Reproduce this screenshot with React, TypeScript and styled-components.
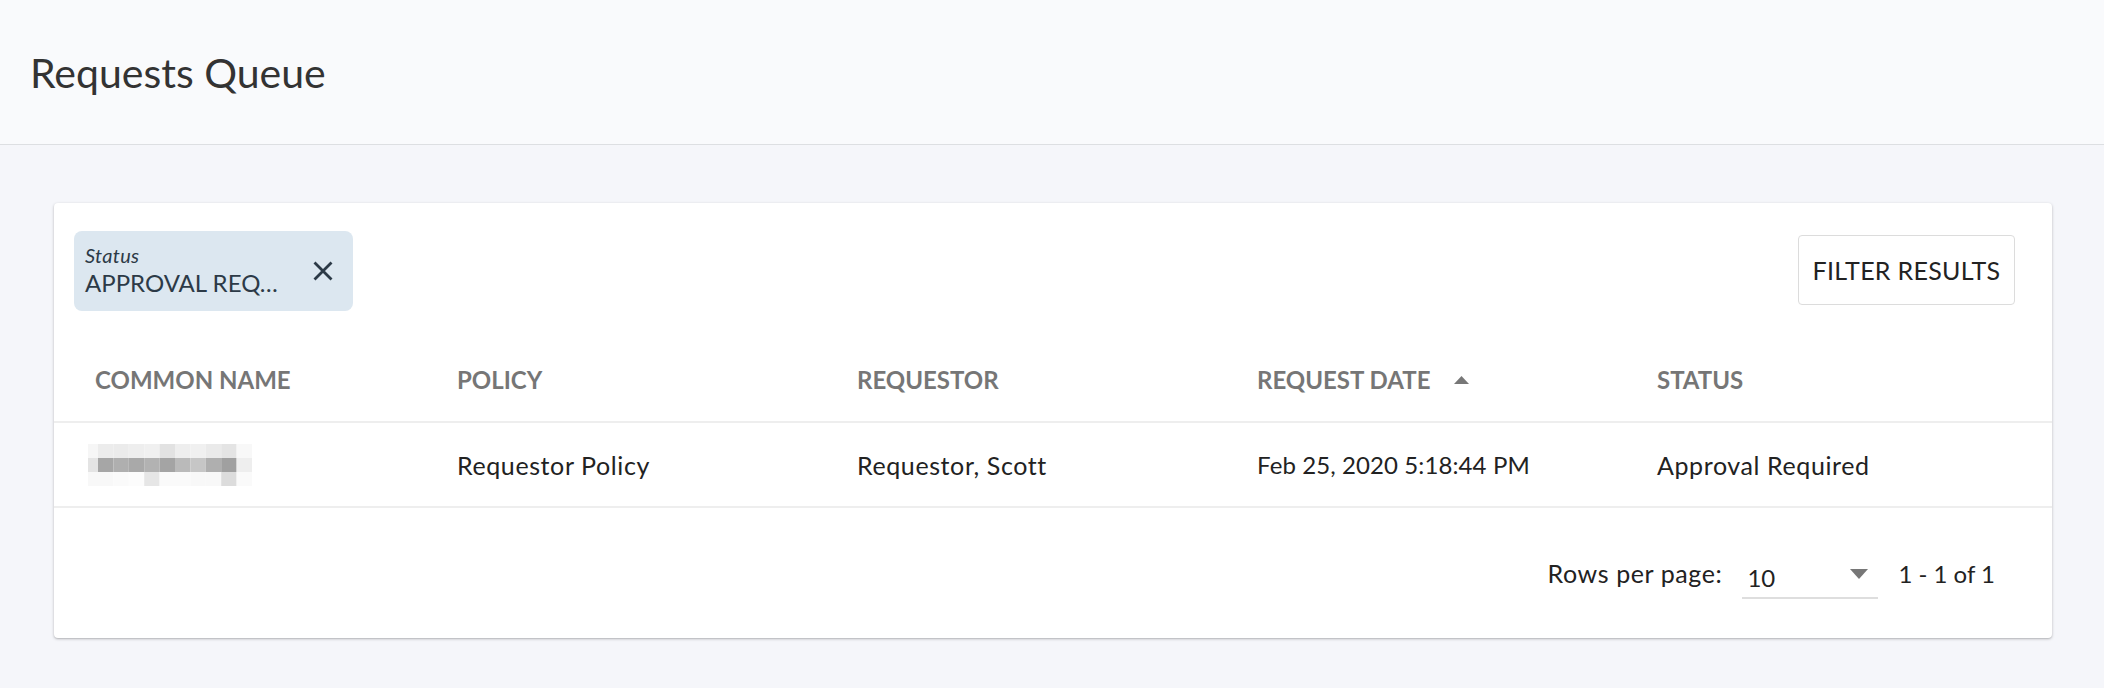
import React from "react";
import styled, { createGlobalStyle } from "styled-components";

const GlobalStyle = createGlobalStyle`
  html, body { margin: 0; padding: 0; }
  body {
    background: #f5f6fa;
    font-family: Lato, "Noto Sans", "Liberation Sans", sans-serif;
    color: #222;
  }
`;

const PageHeader = styled.header`
  height: 144px;
  background: #f9fafc;
  border-bottom: 1px solid #dddfe2;
  display: flex;
  align-items: center;
  padding-left: 30px;
`;

const Title = styled.h1`
  margin: 0;
  font-size: 41px;
  font-weight: 400;
  color: #333;
`;

const Main = styled.main`
  padding: 58px 52px 48px 54px;
`;

const Card = styled.section`
  background: #fff;
  border-radius: 4px;
  box-shadow: 0 1px 3px rgba(0, 0, 0, 0.25), 0 1px 1px rgba(0, 0, 0, 0.06);
`;

const Toolbar = styled.div`
  display: flex;
  justify-content: space-between;
  align-items: flex-start;
  padding: 28px 37px 27px 20px;
`;

const Chip = styled.div`
  width: 279px;
  height: 80px;
  box-sizing: border-box;
  background: #dce7f0;
  border-radius: 8px;
  display: flex;
  align-items: center;
  justify-content: space-between;
  padding: 0 19px 0 11px;
  color: #2c3a47;
`;

const ChipText = styled.div`
  display: flex;
  flex-direction: column;
`;

const ChipLabel = styled.span`
  font-size: 20px;
  font-style: italic;
  letter-spacing: 0.3px;
  line-height: 24px;
`;

const ChipValue = styled.span`
  font-size: 24px;
  line-height: 32px;
`;

const ChipClose = styled.button`
  border: none;
  background: none;
  padding: 0;
  width: 22px;
  height: 22px;
  display: flex;
  align-items: center;
  justify-content: center;
  color: #2c3a47;
  cursor: pointer;
`;

const FilterButton = styled.button`
  margin-top: 4px;
  width: 217px;
  height: 70px;
  box-sizing: border-box;
  border: 1.5px solid #dcdcdc;
  border-radius: 4px;
  background: #fff;
  font-family: inherit;
  font-size: 25px;
  letter-spacing: 0.3px;
  color: #222;
  cursor: pointer;
`;

const Row = styled.div<{ $head?: boolean }>`
  display: grid;
  grid-template-columns: 362px 400px 400px 400px 1fr;
  height: 85px;
  box-sizing: border-box;
  padding-left: 41px;
  border-bottom: 2px solid #eeeeee;
  align-items: center;
  font-size: ${(p) => (p.$head ? "24px" : "25px")};
  letter-spacing: ${(p) => (p.$head ? "0" : "0.6px")};
  font-weight: ${(p) => (p.$head ? 700 : 400)};
  color: ${(p) => (p.$head ? "#767676" : "#222")};
`;

const Cell = styled.div<{ $numeric?: boolean }>`
  display: flex;
  align-items: center;
  gap: 24px;
  white-space: nowrap;
  ${(p) => (p.$numeric ? "font-size: 24px; letter-spacing: 0.1px;" : "")}
`;

const Footer = styled.div`
  height: 130px;
  display: flex;
  justify-content: flex-end;
  align-items: center;
  padding-right: 57px;
  font-size: 24px;
  color: #222;
`;

const RowsLabel = styled.span`
  font-size: 25px;
  letter-spacing: 0.6px;
  margin-right: 20px;
`;

const Select = styled.div`
  width: 136px;
  height: 42px;
  box-sizing: border-box;
  border-bottom: 2px solid #dedede;
  display: flex;
  align-items: center;
  justify-content: space-between;
  padding: 0 10px 0 5px;
  margin-top: 10px;
  margin-right: 20px;
`;

const Caret = styled.span`
  display: flex;
  margin-bottom: 6px;
`;

const Blurred = () => {
  const rows = [
    ["#f6f6f6", "#ececec", "#ebebeb", "#eeeeee", "#f0f0f0", "#e2e2e2", "#eeeeee", "#f0f0f0", "#eaeaea", "#e4e4e4", "#f8f8f8"],
    ["#e4e4e4", "#a6a6a6", "#afafaf", "#a9a9a9", "#b2b2b2", "#a4a4a4", "#bababa", "#c6c6c6", "#afafaf", "#a0a0a0", "#eeeeee"],
    ["#f8f8f8", "#f8f8f8", "#fafafa", "#fcfcfc", "#e6e6e6", "#fafafa", "#fafafa", "#f8f8f8", "#f8f8f8", "#dcdcdc", "#fafafa"],
  ];
  const first = 10;
  const w = 15.4;
  return (
    <svg width={166} height={42} viewBox="0 0 166 42" style={{ marginLeft: -7 }}>
      {rows.map((r, ri) =>
        r.map((c, ci) => (
          <rect
            key={`${ri}-${ci}`}
            x={ci === 0 ? 0 : first + (ci - 1) * w}
            y={ri * 14}
            width={ci === 0 ? first : w}
            height={14}
            fill={c}
          />
        ))
      )}
    </svg>
  );
};

const CloseIcon = () => (
  <svg width="20" height="20" viewBox="0 0 20 20">
    <path d="M1.5 1.5 L18.5 18.5 M18.5 1.5 L1.5 18.5" stroke="currentColor" strokeWidth="2.8" />
  </svg>
);

const SortUp = () => (
  <svg width="15" height="8" viewBox="0 0 15 8">
    <path d="M0 8 L7.5 0 L15 8 Z" fill="#777" />
  </svg>
);

const DropDown = () => (
  <svg width="18" height="10" viewBox="0 0 18 10">
    <path d="M0 0 L18 0 L9 10 Z" fill="#777" />
  </svg>
);

export default function App() {
  return (
    <>
      <GlobalStyle />
      <PageHeader>
        <Title>Requests Queue</Title>
      </PageHeader>
      <Main>
        <Card>
          <Toolbar>
            <Chip>
              <ChipText>
                <ChipLabel>Status</ChipLabel>
                <ChipValue>APPROVAL REQ…</ChipValue>
              </ChipText>
              <ChipClose aria-label="Remove filter">
                <CloseIcon />
              </ChipClose>
            </Chip>
            <FilterButton>FILTER RESULTS</FilterButton>
          </Toolbar>
          <Row $head>
            <Cell>COMMON NAME</Cell>
            <Cell>POLICY</Cell>
            <Cell>REQUESTOR</Cell>
            <Cell>
              REQUEST DATE <SortUp />
            </Cell>
            <Cell>STATUS</Cell>
          </Row>
          <Row>
            <Cell>
              <Blurred />
            </Cell>
            <Cell>Requestor Policy</Cell>
            <Cell>Requestor, Scott</Cell>
            <Cell $numeric>Feb 25, 2020 5:18:44 PM</Cell>
            <Cell>Approval Required</Cell>
          </Row>
          <Footer>
            <RowsLabel>Rows per page:</RowsLabel>
            <Select>
              <span>10</span>
              <Caret>
                <DropDown />
              </Caret>
            </Select>
            <span>1 - 1 of 1</span>
          </Footer>
        </Card>
      </Main>
    </>
  );
}
